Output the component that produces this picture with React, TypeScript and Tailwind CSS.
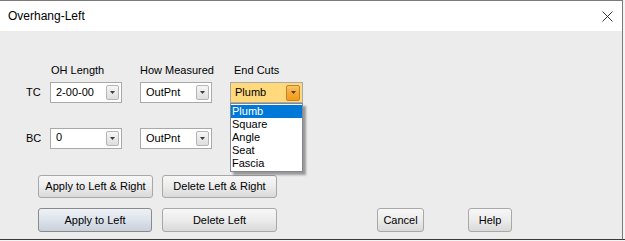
import React from "react";

const font = { fontFamily: '"Liberation Sans", Arial, sans-serif' };

function Arrow({ color = "#3c3c3c" }: { color?: string }) {
  return (
    <svg width="5" height="3" viewBox="0 0 5 3">
      <path d="M0 0 H5 L2.5 3 Z" fill={color} />
    </svg>
  );
}

function Combo({ value, w = "w-[72px]" }: { value: string; w?: string }) {
  return (
    <div className={`${w} h-[21px] border border-[#a9a9a9] bg-white flex items-center justify-between pl-[5px] pr-[2px]`}>
      <span className="text-[11px] text-black leading-none">{value}</span>
      <div className="w-[13px] h-[15px] rounded-[2px] border border-[#b5b5b5] bg-gradient-to-b from-[#f6f6f6] to-[#dedede] flex items-center justify-center">
        <Arrow />
      </div>
    </div>
  );
}

function Btn({ label, w, focused = false, h = "h-[23px]" }: { label: string; w: string; focused?: boolean; h?: string }) {
  return (
    <div
      className={`${w} ${h} rounded-[3px] border ${
        focused ? "border-[#8a8a8a] bg-gradient-to-b from-[#eef2f7] via-[#dde3ec] to-[#c9d0da]" : "border-[#a8a8a8] bg-gradient-to-b from-[#f7f7f7] via-[#ececec] to-[#d9d9d9]"
      } flex items-center justify-center text-[11px] text-black`}
    >
      {label}
    </div>
  );
}

export default function App() {
  return (
    <div className="w-[625px] h-[241px] bg-[#f4f4f4] overflow-hidden relative" style={font}>
      <div className="w-[623px] h-[239px] flex flex-col border-t border-r border-[#7a7a7a] bg-[#ececec]">
        {/* title bar */}
        <div className="h-[30px] bg-white flex items-center justify-between pl-[8px] pr-[9px] shrink-0">
          <span className="text-[12px] text-black">Overhang-Left</span>
          <svg width="11" height="11" viewBox="0 0 11 11">
            <path d="M0.5 0.5 L10.5 10.5 M10.5 0.5 L0.5 10.5" stroke="#222" strokeWidth="0.9" />
          </svg>
        </div>
        {/* content */}
        <div className="flex-1 relative pt-[33px]">
          {/* labels row */}
          <div className="flex h-[13px] text-[11px] text-black leading-[13px]">
            <div className="w-[51px]" />
            <div className="w-[89px]">OH Length</div>
            <div className="w-[94px]">How Measured</div>
            <div>End Cuts</div>
          </div>
          {/* TC row */}
          <div className="flex items-center mt-[5px] h-[21px]">
            <div className="w-[26px]" />
            <div className="w-[24px] text-[11px] text-black">TC</div>
            <Combo value="2-00-00" />
            <div className="w-[18px]" />
            <Combo value="OutPnt" />
            <div className="w-[18px]" />
            <div className="w-[73px] h-[21px] border border-[#a9a9a9] bg-[#ffd97c] flex items-center justify-between pl-[4px] pr-[2px] relative">
              <span className="text-[11px] text-black leading-none">Plumb</span>
              <div className="w-[14px] h-[16px] rounded-[2px] border border-[#c0832e] bg-gradient-to-b from-[#f9c56a] via-[#f7a832] to-[#f39c1f] flex items-center justify-center">
                <Arrow color="#5a3a10" />
              </div>
              {/* dropdown list */}
              <div className="absolute left-[-1px] top-[20px] w-[73px] border border-[#828790] bg-white shadow-[3px_3px_2px_rgba(0,0,0,0.35)] z-10 text-[11px] leading-[13px] text-black py-[1px]">
                <div className="bg-[#0078d7] text-white px-[1px]">Plumb</div>
                <div className="px-[1px]">Square</div>
                <div className="px-[1px]">Angle</div>
                <div className="px-[1px]">Seat</div>
                <div className="px-[1px]">Fascia</div>
              </div>
            </div>
          </div>
          {/* BC row */}
          <div className="flex items-center mt-[25px] h-[21px]">
            <div className="w-[26px]" />
            <div className="w-[24px] text-[11px] text-black">BC</div>
            <div className="w-[72px] h-[21px] border border-[#a9a9a9] bg-white flex items-start justify-between pl-[5px] pr-[2px] pt-[2px]">
              <span className="text-[11px] text-black leading-none pt-[1px]">0</span>
              <div className="w-[13px] h-[15px] rounded-[2px] border border-[#b5b5b5] bg-gradient-to-b from-[#f6f6f6] to-[#dedede] flex items-center justify-center">
                <Arrow />
              </div>
            </div>
            <div className="w-[18px]" />
            <Combo value="OutPnt" />
          </div>
          {/* buttons row 1 */}
          <div className="flex mt-[26px] pl-[38px] gap-[9px]">
            <Btn label="Apply to Left & Right" w="w-[115px]" />
            <Btn label="Delete Left & Right" w="w-[115px]" />
          </div>
          {/* buttons row 2 */}
          <div className="flex mt-[10px] pl-[38px]">
            <Btn label="Apply to Left" w="w-[114px]" h="h-[24px]" focused />
            <div className="w-[10px]" />
            <Btn label="Delete Left" w="w-[115px]" h="h-[24px]" />
            <div className="w-[100px]" />
            <Btn label="Cancel" w="w-[47px]" h="h-[24px]" />
            <div className="w-[44px]" />
            <Btn label="Help" w="w-[44px]" h="h-[24px]" />
          </div>
        </div>
      </div>
      <div className="h-[1px] w-full bg-[#3a3a3a]" />
    </div>
  );
}
